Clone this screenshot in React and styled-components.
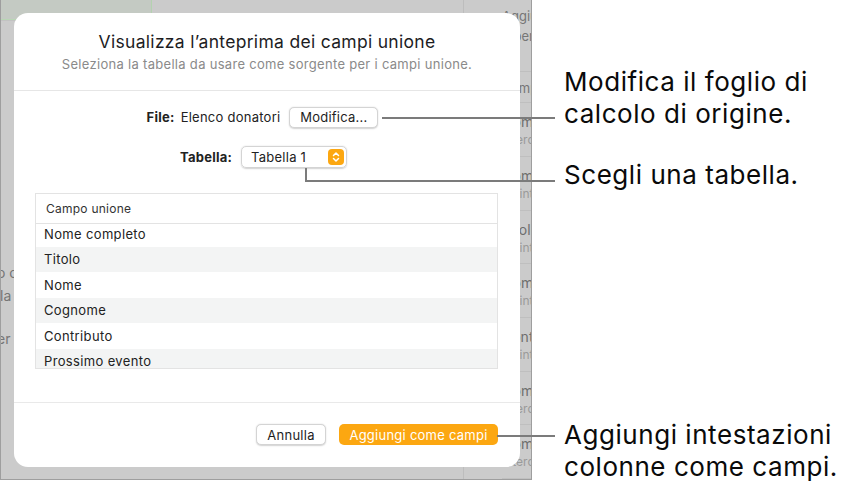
import React from 'react'
import styled, { createGlobalStyle } from 'styled-components'

const GlobalStyle = createGlobalStyle`
  html, body { margin: 0; padding: 0; background: #ffffff; }
  body { font-family: Inter, "Noto Sans", "Liberation Sans", sans-serif; }
`

const Page = styled.div`
  position: relative;
  width: 851px;
  height: 497px;
  display: flex;
  align-items: flex-start;
  overflow: hidden;
`

const Frame = styled.div`
  position: relative;
  width: 530px;
  height: 479px;
  border: 1px solid #9e9e9e;
  border-top: none;
  background: #cbcbcb;
  overflow: hidden;
  flex-shrink: 0;
`

const Backdrop = styled.div`
  display: flex;
  height: 100%;
`

const MainPane = styled.div`
  flex: 1;
  display: flex;
  flex-direction: column;
`

const TopBar = styled.div`
  height: 20px;
  display: flex;
  border-bottom: 1px solid #c2c2c2;
`

const TopCell = styled.div`
  width: 150px;
  background: #c4cac3;
  border-right: 1px solid #b4d2b0;
  border-bottom: 1px solid #b9d6b5;
`

const LeftText = styled.div`
  margin: 245px 0 0 -4px;
  display: flex;
  flex-direction: column;
  gap: 9px;
  color: #767676;
  font-size: 14px;
  line-height: 14px;
  white-space: nowrap;
`

const Sidebar = styled.div`
  width: 68px;
  border-left: 1px solid #bdbdbd;
  display: flex;
  flex-direction: column;
  padding-left: 38px;
  box-sizing: border-box;
  color: #767676;
  font-size: 13px;
  white-space: nowrap;
`

const SideIntro = styled.div`
  height: 73px;
  padding-top: 6px;
  box-sizing: border-box;
  line-height: 20px;
  border-bottom: 1px solid #bfbfbf;
`

const SideHead = styled.div`
  height: 30px;
  line-height: 32px;
  border-bottom: 1px solid #bfbfbf;
`

const SideItem = styled.div`
  height: 54px;
  box-sizing: border-box;
  padding-top: 10px;
  border-bottom: 1px solid #bfbfbf;
  display: flex;
  flex-direction: column;
  gap: 2px;
`

const SideTitle = styled.div`
  font-size: 14px;
  color: #6e6e6e;
`

const SideSub = styled.div`
  font-size: 12px;
  color: #9a9a9a;
`

const Dialog = styled.div`
  position: absolute;
  left: 13px;
  top: 13px;
  width: 506px;
  height: 454px;
  background: #ffffff;
  border-radius: 14px;
  display: flex;
  flex-direction: column;
  color: #1e1e1e;
  letter-spacing: 0.25px;
`

const Header = styled.div`
  height: 78px;
  border-bottom: 1px solid #e6e6e6;
  display: flex;
  flex-direction: column;
  align-items: center;
  padding-top: 18px;
  box-sizing: border-box;
`

const Title = styled.div`
  font-size: 17.5px;
  line-height: 22px;
  letter-spacing: 0.3px;
  color: #1d1d1f;
`

const Subtitle = styled.div`
  margin-top: 3px;
  font-size: 13px;
  line-height: 16px;
  letter-spacing: 0.3px;
  color: #8a8a8a;
`

const Body = styled.div`
  flex: 1;
  border-bottom: 1px solid #e9e9e9;
  padding: 15px 22px 0 21px;
  display: flex;
  flex-direction: column;
`

const FieldRow = styled.div`
  display: flex;
  align-items: center;
  justify-content: center;
  gap: ${p => p.$gap || 6}px;
  height: 22px;
  margin-bottom: 18px;
  margin-left: ${p => p.$shift || 0}px;
  font-size: 13px;
`

const Label = styled.span`
  font-weight: 700;
  color: #222;
`

const Value = styled.span`
  color: #222;
  margin-right: 3px;
`

const PushButton = styled.button`
  height: 21px;
  padding: 0;
  font-family: inherit;
  font-size: 13px;
  letter-spacing: 0.25px;
  color: ${p => (p.$primary ? '#ffffff' : '#1e1e1e')};
  background: ${p => (p.$primary ? '#fca711' : '#ffffff')};
  border: ${p => (p.$primary ? 'none' : '0.5px solid #d4d4d4')};
  border-radius: 5px;
  box-shadow: ${p => (p.$primary ? 'none' : '0 0.5px 1.5px rgba(0,0,0,0.18)')};
  width: ${p => p.$w}px;
  cursor: default;
`

const SelectBox = styled.div`
  width: 106px;
  height: 22px;
  box-sizing: border-box;
  border: 0.5px solid #d4d4d4;
  border-radius: 5px;
  box-shadow: 0 0.5px 1.5px rgba(0,0,0,0.18);
  display: flex;
  align-items: center;
  justify-content: space-between;
  padding: 0 2px 0 9px;
  font-size: 13px;
  color: #222;
`

const Stepper = styled.span`
  width: 16px;
  height: 16px;
  border-radius: 4px;
  background: #fca711;
  display: flex;
  align-items: center;
  justify-content: center;
`

const Table = styled.div`
  margin-top: 7px;
  height: 174px;
  border: 1px solid #e3e3e3;
  display: flex;
  flex-direction: column;
  overflow: hidden;
`

const TableHead = styled.div`
  height: 29px;
  flex-shrink: 0;
  border-bottom: 1px solid #e3e3e3;
  padding-left: 10px;
  display: flex;
  align-items: center;
  font-size: 12px;
  color: #333;
  background: #fff;
  position: relative;
  z-index: 1;
`

const Rows = styled.div`
  margin-top: -3px;
`

const Row = styled.div`
  height: 25.5px;
  display: flex;
  align-items: center;
  padding-left: 8px;
  font-size: 13px;
  letter-spacing: 0.35px;
  color: #222;
  background: ${p => (p.$odd ? '#f3f4f4' : '#ffffff')};
`

const Footer = styled.div`
  height: 64px;
  display: flex;
  justify-content: flex-end;
  align-items: flex-start;
  gap: 13px;
  padding: 21px 22px 0 0;
  box-sizing: border-box;
`

const Callouts = styled.div`
  margin-left: 32px;
  display: flex;
  flex-direction: column;
  font-size: 26px;
  line-height: 32px;
  letter-spacing: 0.55px;
  color: #0a0a0a;
  white-space: nowrap;
`

const Note = styled.div`
  margin-top: ${p => p.$top}px;
`

const Leaders = styled.svg`
  position: absolute;
  left: 0;
  top: 0;
  pointer-events: none;
`

const fields = ['Nome completo', 'Titolo', 'Nome', 'Cognome', 'Contributo', 'Prossimo evento']

const sideItems = [
  { t: 'Nome', s: 'Intero' },
  { t: 'Nome', s: 'Estinto' },
  { t: 'Titolo', s: 'Estinto' },
  { t: 'Nome', s: 'Estinto' },
  { t: 'Contributo', s: 'Estinto' },
  { t: 'Nome', s: 'Intero' },
  { t: 'Nome', s: 'Intero' },
]

const App = () => {
  return (
    <Page>
      <GlobalStyle />
      <Frame>
        <Backdrop>
          <MainPane>
            <TopBar>
              <TopCell />
            </TopBar>
            <LeftText>
              <span>o c</span>
              <span style={{ marginLeft: 3 }}>la</span>
              <span style={{ marginTop: 20 }}>er</span>
            </LeftText>
          </MainPane>
          <Sidebar>
            <SideIntro>
              <div>Aggiungi</div>
              <div style={{ marginLeft: 3 }}>r per</div>
            </SideIntro>
            <SideHead>Campi unione</SideHead>
            {sideItems.map((it, i) => (
              <SideItem key={i}>
                <SideTitle>{it.t}</SideTitle>
                <SideSub>{it.s}</SideSub>
              </SideItem>
            ))}
          </Sidebar>
        </Backdrop>

        <Dialog>
          <Header>
            <Title>Visualizza l’anteprima dei campi unione</Title>
            <Subtitle>Seleziona la tabella da usare come sorgente per i campi unione.</Subtitle>
          </Header>
          <Body>
            <FieldRow $gap={6} $shift={-8}>
              <Label>File:</Label>
              <Value>Elenco donatori</Value>
              <PushButton $w={89}>Modifica...</PushButton>
            </FieldRow>
            <FieldRow $gap={9} $shift={-6}>
              <Label>Tabella:</Label>
              <SelectBox>
                <span>Tabella 1</span>
                <Stepper>
                  <svg width="10" height="12" viewBox="0 0 10 12">
                    <path d="M2.5 4.5 L5 2 L7.5 4.5 M2.5 7.5 L5 10 L7.5 7.5" fill="none" stroke="#fff" strokeWidth="1.5" strokeLinecap="round" strokeLinejoin="round" />
                  </svg>
                </Stepper>
              </SelectBox>
            </FieldRow>
            <Table>
              <TableHead>Campo unione</TableHead>
              <Rows>
                {fields.map((f, i) => (
                  <Row key={f} $odd={i % 2 === 1}>{f}</Row>
                ))}
              </Rows>
            </Table>
          </Body>
          <Footer>
            <PushButton $w={70}>Annulla</PushButton>
            <PushButton $primary $w={159}>Aggiungi come campi</PushButton>
          </Footer>
        </Dialog>
      </Frame>

      <Callouts>
        <Note $top={66}>Modifica il foglio di<br />calcolo di origine.</Note>
        <Note $top={29}>Scegli una tabella.</Note>
        <Note $top={228}>Aggiungi intestazioni<br />colonne come campi.</Note>
      </Callouts>

      <Leaders width="851" height="497">
        <g fill="none" stroke="#7b7b7b" strokeWidth="2">
          <polyline points="382,118 555,118" />
          <polyline points="306,168 306,181 555,181" />
          <polyline points="497,436 555,436" />
        </g>
      </Leaders>
    </Page>
  )
}

export default App
